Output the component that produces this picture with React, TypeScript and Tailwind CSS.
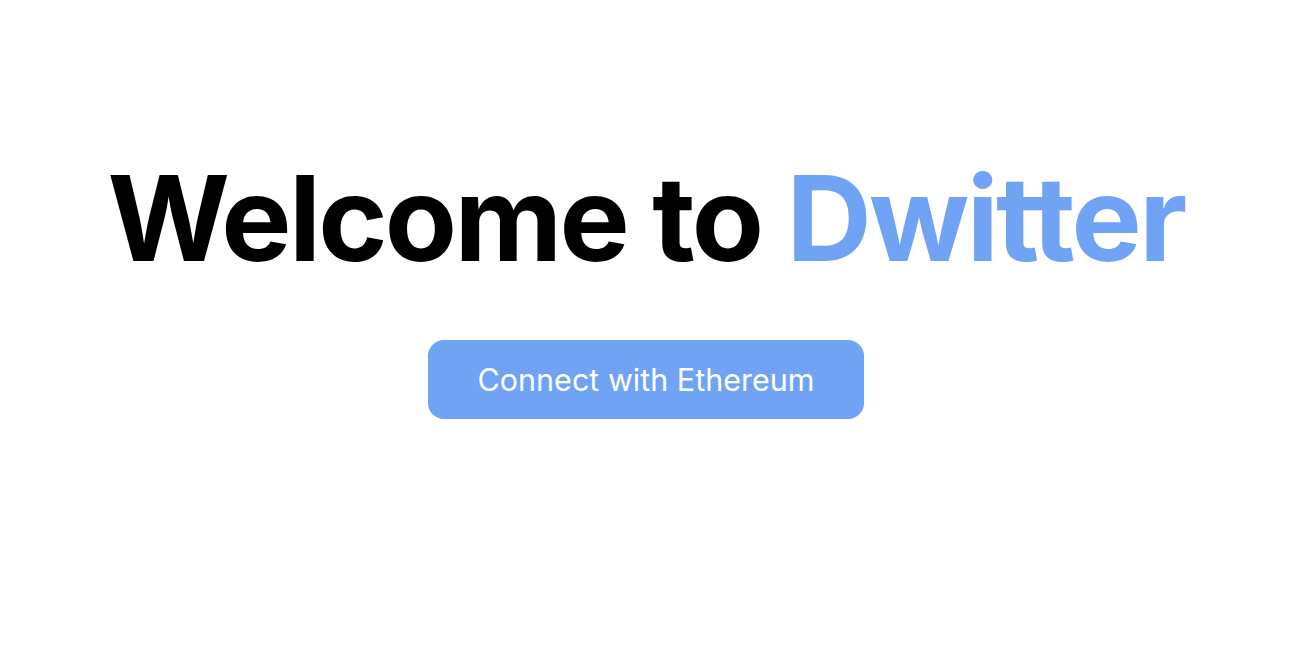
export default function App() {
  return (
    <div className="flex h-[656px] w-full flex-col items-center bg-white pt-[159px] pr-5 font-['Inter',sans-serif]">
      <h1 className="text-[118px] font-bold leading-none tracking-[-0.023em] text-black">
        Welcome to <span className="text-[#70a3f3]">Dwitter</span>
      </h1>
      <button className="mt-[63px] flex h-[79px] w-[436px] items-center justify-center rounded-2xl bg-[#70a3f3] text-[30.5px] text-white">
        Connect with Ethereum
      </button>
    </div>
  );
}
